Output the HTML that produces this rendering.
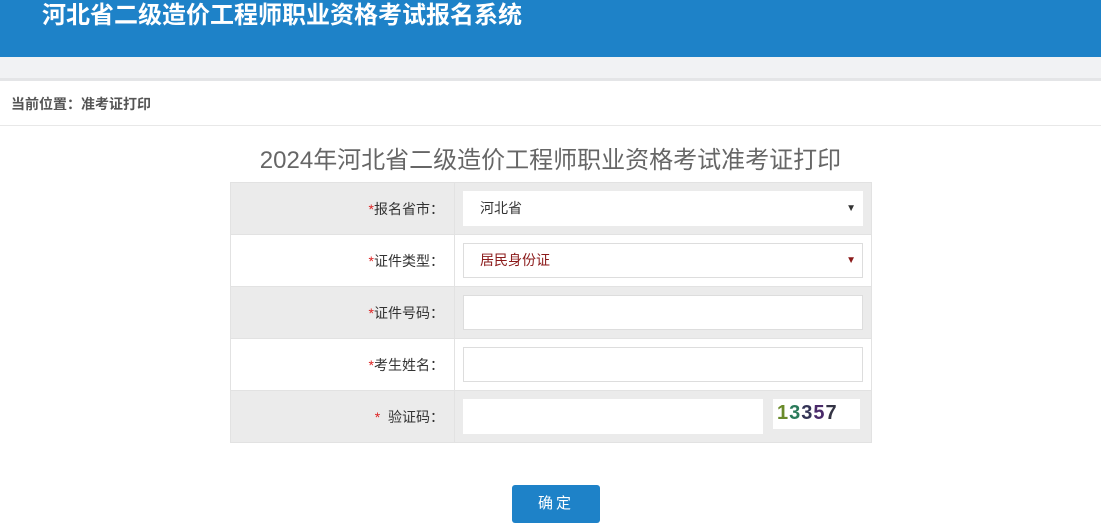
<!DOCTYPE html>
<html><head><meta charset="utf-8"><style>
body{margin:0;width:1101px;height:531px;overflow:hidden;background:#fff;font-family:"Liberation Sans","Noto Sans CJK SC",sans-serif;}
.hd{position:absolute;left:0;top:0;width:1101px;height:57px;background:#1e82c8;}
.hd span{position:absolute;left:42px;top:1px;color:#fff;font-size:24px;font-weight:bold;line-height:30px;}
.band{position:absolute;left:0;top:57px;width:1101px;height:21px;background:#f1f2f4;border-bottom:3px solid #e4e5e7;}
.crumb{position:absolute;left:11px;top:94px;font-size:14px;font-weight:bold;color:#555;}
.line{position:absolute;left:0;top:125px;width:1101px;height:1px;background:#e8e8e8;}
.title{position:absolute;left:0;width:1101px;top:146px;text-align:center;font-size:24px;color:#666;line-height:30px;}
table{position:absolute;left:230px;top:182px;width:642px;border-collapse:collapse;}
td{height:51px;border:1px solid #e2e2e2;padding:0;font-size:14px;color:#333;}
tr.g td{background:#ebebeb;}
td.l{width:224px;text-align:right;padding-right:10px;box-sizing:border-box;}
td.l b{color:#d22;font-weight:normal;}
.in{margin-left:8px;width:400px;height:35px;background:#fff;border:1px solid #ddd;box-sizing:border-box;position:relative;font-size:14px;line-height:33px;padding-left:16px;}
.in i{position:absolute;right:6px;top:0;font-style:normal;font-size:10px;}
.btn{position:absolute;left:512px;top:485px;width:88px;height:38px;background:#1e82c8;border-radius:3px;color:#fff;font-size:15px;text-align:center;line-height:38px;letter-spacing:3px;}
</style></head><body>
<div class="hd"><span>河北省二级造价工程师职业资格考试报名系统</span></div>
<div class="band"></div>
<div class="crumb">当前位置：准考证打印</div>
<div class="line"></div>
<div class="title">2024年河北省二级造价工程师职业资格考试准考证打印</div>
<table>
<tr class="g"><td class="l"><b>*</b>报名省市：</td><td><div class="in" style="border-color:#fff">河北省<i>▼</i></div></td></tr>
<tr><td class="l"><b>*</b>证件类型：</td><td><div class="in" style="color:#8b1a1a">居民身份证<i style="color:#8b1a1a">▼</i></div></td></tr>
<tr class="g"><td class="l"><b>*</b>证件号码：</td><td><div class="in"></div></td></tr>
<tr><td class="l"><b>*</b>考生姓名：</td><td><div class="in"></div></td></tr>
<tr class="g"><td class="l"><b>*</b>&nbsp;&nbsp;验证码：</td><td style="position:relative"><div class="in" style="width:300px;border-color:#fff"></div>
<div style="position:absolute;left:318px;top:8px;width:87px;height:30px;background:#fff;font-weight:bold;font-size:20px;line-height:28px;padding-left:4px;box-sizing:border-box;letter-spacing:1px"><span style="color:#6a8a2a">1</span><span style="color:#2a7a5a">3</span><span style="color:#335">3</span><span style="color:#4a2a6a">5</span><span style="color:#334">7</span></div></td></tr>
</table>
<div class="btn">确定</div>
</body></html>
